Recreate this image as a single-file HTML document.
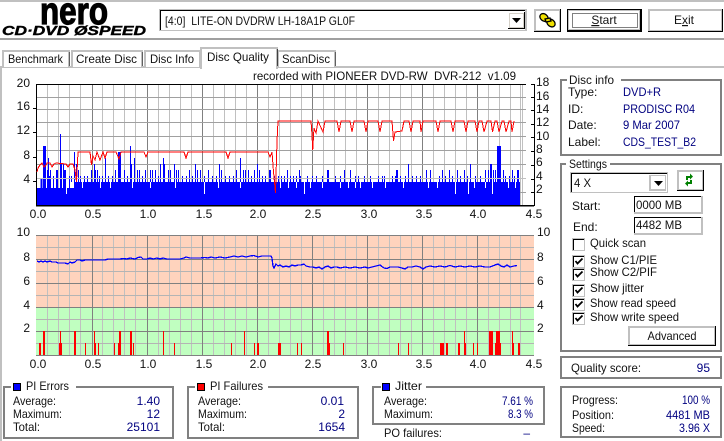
<!DOCTYPE html>
<html><head><meta charset="utf-8"><style>
html,body{margin:0;padding:0;background:#fff;overflow:hidden}
svg{display:block}
text{font-family:"Liberation Sans",sans-serif;font-size:12px;fill:#111}
.b{fill:#000080}
.e{text-anchor:end}
.m{text-anchor:middle}
.g{fill:none;stroke:#808080;stroke-width:2}
</style></head><body>
<svg width="724" height="441" viewBox="0 0 724 441" xmlns="http://www.w3.org/2000/svg">
<rect width="724" height="441" fill="#fff"/>
<g shape-rendering="crispEdges">
<rect x="0" y="0" width="724" height="2" fill="#c0c0c0"/>
<rect x="0" y="38" width="724" height="2" fill="#a0a0a0"/>
<rect x="0" y="66" width="724" height="2" fill="#c0c0c0"/>
<rect x="0" y="66" width="2" height="375" fill="#c0c0c0"/>
</g>
<!-- logo -->
<text x="40" y="24" style="font-size:38px;font-weight:bold;fill:#000;stroke:#000;stroke-width:1.200" textLength="68" lengthAdjust="spacingAndGlyphs">nero</text>
<text x="2" y="35" style="font-size:12.500px;font-weight:bold;font-style:italic;fill:#000;stroke:#000;stroke-width:.4" textLength="144" lengthAdjust="spacingAndGlyphs">CD·DVD ØSPEED</text>
<!-- drive combo -->
<g shape-rendering="crispEdges">
<rect x="159" y="9" width="368" height="22" fill="#c0c0c0"/>
<rect x="160" y="10" width="365" height="20" fill="#000"/>
<rect x="161" y="11" width="364" height="19" fill="#fff"/>
<rect x="508" y="12" width="17" height="17" fill="#000"/>
<rect x="508" y="12" width="16" height="16" fill="#fff"/>
<rect x="509" y="13" width="15" height="15" fill="#d4d0c8"/>
<rect x="510" y="14" width="13" height="13" fill="#fff"/>
</g>
<path d="M512 18h9l-4.500 5z" fill="#000"/>
<text x="165" y="25" textLength="190" lengthAdjust="spacingAndGlyphs">[4:0]&#160; LITE-ON DVDRW LH-18A1P GL0F</text>
<!-- chain button -->
<g shape-rendering="crispEdges">
<rect x="534" y="9" width="27" height="23" fill="#000"/>
<rect x="534" y="9" width="26" height="22" fill="#c0c0c0"/>
<rect x="536" y="11" width="23" height="19" fill="#fff"/>
</g>
<g fill="#f0e000" stroke="#000" stroke-width="1.300">
<ellipse cx="544" cy="17.500" rx="4.500" ry="3.500" transform="rotate(40 544 17.500)"/>
<ellipse cx="551" cy="23" rx="4.500" ry="3.500" transform="rotate(40 551 23)"/>
<path d="M545 19l5 -1 1 3 -5 1z"/>
</g>
<!-- Start -->
<g shape-rendering="crispEdges">
<rect x="567" y="9" width="75" height="23" fill="#000"/>
<rect x="568" y="10" width="72" height="20" fill="#c0c0c0"/>
<rect x="569" y="11" width="70" height="18" fill="#fff"/>
<rect x="572.500" y="13.500" width="65" height="14" fill="none" stroke="#000" stroke-width="1" stroke-dasharray="1 1"/>
<!-- Exit -->
<rect x="648" y="9" width="75" height="23" fill="#000"/>
<rect x="648" y="9" width="74" height="22" fill="#c0c0c0"/>
<rect x="650" y="11" width="71" height="19" fill="#fff"/>
</g>
<text x="604" y="24" class="m"><tspan text-decoration="underline">S</tspan>tart</text>
<text x="684" y="24" class="m">E<tspan text-decoration="underline">x</tspan>it</text>
<!-- tabs -->
<g fill="#fff" stroke="#c0c0c0" stroke-width="2" shape-rendering="crispEdges">
<path d="M3 67V51H69V67"/>
<path d="M72 67V51H142V67"/>
<path d="M145 67V51H200V67"/>
<path d="M278 67V51H335V67"/>
</g>
<g stroke="#606060" stroke-width="1" shape-rendering="crispEdges">
<path d="M69.500 52V66M142.500 52V66M335.500 52V66"/>
</g>
<path d="M201 69V48H277V69" fill="#fff" stroke="#c0c0c0" stroke-width="2" shape-rendering="crispEdges"/>
<path d="M277.500 49V66" stroke="#404040" shape-rendering="crispEdges"/>
<rect x="202" y="64" width="74" height="6" fill="#fff"/>
<text x="8" y="63" textLength="55" lengthAdjust="spacingAndGlyphs">Benchmark</text>
<text x="76" y="63" textLength="61" lengthAdjust="spacingAndGlyphs">Create Disc</text>
<text x="150" y="63" textLength="44" lengthAdjust="spacingAndGlyphs">Disc Info</text>
<text x="207" y="61" textLength="62" lengthAdjust="spacingAndGlyphs">Disc Quality</text>
<text x="282" y="63" textLength="48" lengthAdjust="spacingAndGlyphs">ScanDisc</text>
<text x="253" y="80" textLength="263" xml:space="preserve" lengthAdjust="spacingAndGlyphs">recorded with PIONEER DVD-RW  DVR-212  v1.09</text>

<!-- chart 1 -->
<g shape-rendering="crispEdges">
<path d="M47.500 84V206M58.500 84V206M69.500 84V206M80.500 84V206M102.500 84V206M113.500 84V206M124.500 84V206M135.500 84V206M158.500 84V206M169.500 84V206M180.500 84V206M191.500 84V206M213.500 84V206M224.500 84V206M235.500 84V206M246.500 84V206M268.500 84V206M279.500 84V206M290.500 84V206M301.500 84V206M323.500 84V206M334.500 84V206M345.500 84V206M356.500 84V206M378.500 84V206M389.500 84V206M400.500 84V206M411.500 84V206M433.500 84V206M444.500 84V206M455.500 84V206M466.500 84V206M488.500 84V206M499.500 84V206M510.500 84V206M520.500 84V206M522.500 84V206" stroke="#c0c0c0"/>
<path d="M92.500 84V206M147.500 84V206M202.500 84V206M257.500 84V206M312.500 84V206M367.500 84V206M422.500 84V206M477.500 84V206" stroke="#808080"/>
<path d="M36 97.500H526M36 109.500H526M36 122.500H526M36 136.500H526M36 150.500H526M36 164.500H526M36 192.500H526" stroke="#a0a0a0"/>
<!-- blue mass -->
<path d="M37 206V188H75V182H520V206Z" fill="#0000ff"/>
<path d="M41 188V178M42 188V178M43.500 188V146M44.500 188V146M45.500 188V146M47.500 188V170M48.500 188V158M49.500 188V176M50.500 188V170M53.500 188V176M56.500 188V170M57.500 188V170M60.500 188V134M61.500 188V164M63.500 188V164M64.500 188V170M65.500 188V170M69.500 188V176M71.500 188V176M74.500 188V152M76.500 182V164M78.500 182V170M80.500 182V176M84.500 182V176M87.500 182V176M91.500 182V170M94.500 182V164M95.500 182V170M97.500 182V170M99.500 182V176M102.500 182V176M105.500 182V158M108.500 182V176M112.500 182V176M115.500 182V170M118.500 182V152M119.500 182V152M120.500 182V152M124.500 182V170M127.500 182V176M130.500 182V146M131.500 182V164M134.500 182V158M137.500 182V170M139.500 182V170M142.500 182V176M145.500 182V170M150.500 182V170M152.500 182V170M155.500 182V170M158.500 182V176M160.500 182V164M163.500 182V158M164.500 182V164M168.500 182V170M170.500 182V170M174.500 182V164M176.500 182V170M178.500 182V170M182.500 182V176M186.500 182V176M189.500 182V170M192.500 182V176M195.500 182V164M197.500 182V170M200.500 182V170M204.500 182V176M208.500 182V170M212.500 182V176M216.500 182V176M219.500 182V164M221.500 182V170M225.500 182V176M229.500 182V176M233.500 182V176M236.500 182V170M240.500 182V158M243.500 182V170M245.500 182V170M248.500 182V170M251.500 182V176M254.500 182V170M257.500 182V164M259.500 182V170M262.500 182V176M265.500 182V176M269.500 182V170M270.500 182V170M274.500 182V176M278.500 182V176M281.500 182V176M284.500 182V176M287.500 182V170M290.500 182V176M293.500 182V176M296.500 182V176M299.500 182V170M300.500 182V176M307.500 182V176M312.500 182V176M316.500 182V176M322.500 182V176M327.500 182V170M328.500 182V170M335.500 182V176M340.500 182V176M344.500 182V170M350.500 182V170M355.500 182V176M358.500 182V176M364.500 182V176M370.500 182V176M378.500 182V176M382.500 182V176M384.500 182V176M392.500 182V176M395.500 182V176M400.500 182V176M405.500 182V176M408.500 182V164M412.500 182V176M416.500 182V176M420.500 182V176M396.500 182V170M397.500 182V170M426.500 182V170M430.500 182V170M439.500 182V176M442.500 182V170M445.500 182V176M449.500 182V170M452.500 182V176M457.500 182V170M460.500 182V176M464.500 182V170M467.500 182V176M470.500 182V164M475.500 182V176M480.500 182V176M485.500 182V170M488.500 182V170M490.500 182V164M491.500 182V164M493.500 182V170M495.500 182V170M497.500 182V146M498.500 182V146M499.500 182V146M500.500 182V146M503.500 182V170M505.500 182V176M509.500 182V176M512.500 182V170M514.500 182V176M517.500 182V170M518.500 182V170" stroke="#0000ff" fill="none"/>
<path d="M66.500 182V194M71.500 182V188M82.500 182V188M100.500 182V188M204.500 182V194M218.500 182V188M132.500 182V188M110.500 182V188M150.500 182V188M175.500 182V188M240.500 182V188M304.500 182V194M288.500 182V188M296.500 182V188M310.500 182V188M322.500 182V188M340.500 182V188M348.500 182V188M355.500 182V188M372.500 182V188M385.500 182V188M403.500 182V188M455.500 182V194M428.500 182V188M437.500 182V188M468.500 182V194M474.500 182V188M485.500 182V188M492.500 182V194M508.500 182V188M515.500 182V188M360.500 182V188M280.500 182V188" stroke="#fff"/>
<path d="M36 178.500H526" stroke="#c0c0c0"/>
<rect x="36" y="84" width="490" height="1" fill="#000"/>
<rect x="36" y="84" width="1" height="122" fill="#000"/>
<rect x="36" y="205" width="498" height="1.500" fill="#000"/>
<path d="M534.500 84V206" stroke="#000"/>
<path d="M531 84.500h4M531 97.500h4M531 110.500h4M531 124.500h4M531 137.500h4M531 151.500h4M531 165.500h4M531 179.500h4M531 192.500h4M33 108.500h3M33 132.500h3M33 157.500h3M33 181.500h3" stroke="#000"/>
<path d="M37 172L38 168L40 165L42 163L44 167L46 165L47 163L50 163L52 167L54 164L56 163L66 164L68 167L70 164L73 164L75 170L76.500 182L78 152L90 152L91.500 165L93 156L95 160L97 152L100 160L103 152L105 158L107 152L116 152L119 159L121 152L144 152L146 157L148 152L184 152L186 158L188 152L226 152L228 158L230 152L268 152L270 157L272 152L273.500 172L275.500 193L277 141L278 121L311 121L312 135L312.700 150L314 128L316 133L318 121L323 132L325 121L337 121L339 132L341 121L350 121L352 132L354 121L364 121L366 132L368 121L378 121L380 132L382 121L392 121L393.500 141L395 132L402 131L404 121L409 121L411 132L413 121L420 121L421 132L423 121L436 121L438 132L440 121L451 121L453 132L455 121L464 121L466 132L468 121L475 121L477 132L479 121L482 121L484 132L487 121L491 121L492.500 132L495 121L497 121L499 132L502 121L504 121L506 132L509 121L511 121L512 132L514 121" fill="none" stroke="#ff0000" stroke-width="1"/>
</g>

<!-- chart 2 -->
<g shape-rendering="crispEdges">
<rect x="36" y="235" width="498" height="72" fill="#ffd3bd"/>
<rect x="36" y="307" width="498" height="48" fill="#c0ffc0"/>
<path d="M47.500 235V355M58.500 235V355M69.500 235V355M80.500 235V355M102.500 235V355M113.500 235V355M124.500 235V355M135.500 235V355M158.500 235V355M169.500 235V355M180.500 235V355M191.500 235V355M213.500 235V355M224.500 235V355M235.500 235V355M246.500 235V355M268.500 235V355M279.500 235V355M290.500 235V355M301.500 235V355M323.500 235V355M334.500 235V355M345.500 235V355M356.500 235V355M378.500 235V355M389.500 235V355M400.500 235V355M411.500 235V355M433.500 235V355M444.500 235V355M455.500 235V355M466.500 235V355M488.500 235V355M499.500 235V355M510.500 235V355M520.500 235V355" stroke="#c0c0c0"/>
<path d="M36 247.500H534M36 271.500H534M36 295.500H534M36 319.500H534M36 343.500H534" stroke="#b4b4b4"/>
<path d="M92.500 235V355M147.500 235V355M202.500 235V355M257.500 235V355M312.500 235V355M367.500 235V355M422.500 235V355M477.500 235V355M36 235.500H534M36 259.500H534M36 283.500H534M36 307.500H534M36 331.500H534M36 355.500H534" stroke="#808080"/>
<path d="M39.500 343V355M40.500 343V355M43.500 331V355M44.500 331V355M59.500 343V355M60.500 331V355M61.500 343V355M74.500 331V355M75.500 331V355M85.500 343V355M94.500 331V355M95.500 343V355M98.500 343V355M114.500 343V355M118.500 343V355M119.500 331V355M120.500 331V355M130.500 331V355M131.500 331V355M133.500 343V355M163.500 331V355M174.500 343V355M231.500 343V355M244.500 331V355M254.500 343V355M257.500 343V355M258.500 343V355M278.500 343V355M279.500 343V355M280.500 343V355M297.500 343V355M301.500 343V355M327.500 331V355M328.500 331V355M329.500 343V355M343.500 343V355M398.500 343V355M408.500 343V355M440.500 343V355M441.500 343V355M442.500 343V355M443.500 343V355M446.500 343V355M447.500 343V355M458.500 343V355M459.500 343V355M464.500 331V355M465.500 343V355M473.500 343V355M477.500 343V355M489.500 331V355M490.500 331V355M491.500 331V355M492.500 331V355M495.500 343V355M496.500 331V355M497.500 331V355M498.500 331V355M499.500 331V355M500.500 343V355M512.500 331V355M513.500 343V355M518.500 343V355M519.500 343V355" stroke="#ff0000"/>
<path d="M37 261L39 262L41 261L43 262L45 261L47 262L50 261L52 262L56 262L58 263L65 263L68 264L70 262L72 263L75 262L77 260L80 260L82 261L85 260L90 260L92 260L97 260L105 260L108 259L115 259L120 259L123 258.500L127 259L130 258L135 259L138 257.500L141 257L143 259L147 259L150 258L153 259L157 258L160 259L163 258L167 259L175 259L180 259L184 258L186 257L190 258L195 258L200 258L205 257.500L208 258L211 257L215 258L220 257L225 258L230 257L234 256L238 257L242 256L246 257L250 256L254 255.500L258 257L262 256L268 256L271 256L272 258L273 266L274 268L276 264L278 266L280 265L283 267L286 266L289 267L292 265L295 266L298 265L301 265L304 264L306 266L310 267L313 267L316 268L319 267L322 269L325 267L328 266L331 268L334 267L337 267L340 268L345 267L350 268L355 267L360 268L365 267L368 268L372 267L376 266L380 265L384 268L387 268.500L390 267L394 267L398 267L402 268L405 269L408 267L412 267L416 266L420 267L423 269L426 267L430 266L435 267L440 266L445 267L450 265.500L455 267L460 266L465 267L470 266L475 267L480 266L485 267L490 267L495 265L498 264L501 266L504 267L507 265L510 267L514 266L517 265.500" fill="none" stroke="#0000ff" stroke-width="1.300"/>
</g>

<!-- axis labels -->
<text x="30" y="87" class="e">20</text><text x="30" y="110" class="e">16</text><text x="30" y="134" class="e">12</text><text x="30" y="159" class="e">8</text><text x="30" y="183" class="e">4</text>
<text x="536" y="86">18</text><text x="536" y="100">16</text><text x="536" y="113">14</text><text x="536" y="126">12</text><text x="536" y="140">10</text><text x="536" y="153">8</text><text x="536" y="166">6</text><text x="536" y="180">4</text><text x="536" y="193">2</text>
<text x="38" y="218" class="m">0.0</text><text x="93" y="218" class="m">0.5</text><text x="148" y="218" class="m">1.0</text><text x="204" y="218" class="m">1.5</text><text x="258" y="218" class="m">2.0</text><text x="313" y="218" class="m">2.5</text><text x="369" y="218" class="m">3.0</text><text x="424" y="218" class="m">3.5</text><text x="478" y="218" class="m">4.0</text><text x="534" y="218" class="m">4.5</text>
<text x="38" y="368" class="m">0.0</text><text x="93" y="368" class="m">0.5</text><text x="148" y="368" class="m">1.0</text><text x="204" y="368" class="m">1.5</text><text x="258" y="368" class="m">2.0</text><text x="313" y="368" class="m">2.5</text><text x="369" y="368" class="m">3.0</text><text x="424" y="368" class="m">3.5</text><text x="478" y="368" class="m">4.0</text><text x="534" y="368" class="m">4.5</text>
<text x="30" y="236" class="e">10</text><text x="30" y="261" class="e">8</text><text x="30" y="285" class="e">6</text><text x="30" y="309" class="e">4</text><text x="30" y="332" class="e">2</text>
<text x="537" y="236">10</text><text x="537" y="261">8</text><text x="537" y="285">6</text><text x="537" y="309">4</text><text x="537" y="332">2</text>

<!-- group boxes -->
<g shape-rendering="crispEdges">
<rect x="561" y="80" width="160" height="75" class="g"/>
<rect x="561" y="164" width="160" height="187" class="g"/>
<rect x="561" y="357" width="160" height="21" class="g"/>
<rect x="561" y="387" width="160" height="50" class="g"/>
<rect x="4" y="387" width="169" height="51" class="g"/>
<rect x="188" y="387" width="170" height="51" class="g"/>
<rect x="373" y="387" width="171" height="37" class="g"/>
<rect x="567" y="76" width="54" height="9" fill="#fff"/>
<rect x="566" y="160" width="44" height="9" fill="#fff"/>
<rect x="11" y="382" width="65" height="9" fill="#fff"/>
<rect x="195" y="382" width="73" height="9" fill="#fff"/>
<rect x="381" y="382" width="45" height="8" fill="#fff"/>
<rect x="13" y="383" width="8" height="8" fill="#000"/>
<rect x="14" y="384" width="6" height="6" fill="#0000ff"/>
<rect x="197" y="383" width="8" height="8" fill="#000"/>
<rect x="198" y="384" width="6" height="6" fill="#ff0000"/>
<rect x="382" y="383" width="8" height="8" fill="#000"/>
<rect x="383" y="384" width="6" height="6" fill="#0000ff"/>
</g>
<text x="569" y="84" textLength="45" lengthAdjust="spacingAndGlyphs">Disc info</text>
<text x="568" y="96">Type:</text><text x="623" y="96" class="b" textLength="38" lengthAdjust="spacingAndGlyphs">DVD+R</text>
<text x="568" y="113">ID:</text><text x="623" y="113" class="b" textLength="72" lengthAdjust="spacingAndGlyphs">PRODISC R04</text>
<text x="568" y="129">Date:</text><text x="623" y="129" class="b" textLength="57" lengthAdjust="spacingAndGlyphs">9 Mar 2007</text>
<text x="568" y="146">Label:</text><text x="623" y="146" class="b" textLength="73" lengthAdjust="spacingAndGlyphs">CDS_TEST_B2</text>

<text x="569" y="168" textLength="38" lengthAdjust="spacingAndGlyphs">Settings</text>
<!-- speed combo -->
<g shape-rendering="crispEdges">
<rect x="570" y="172" width="98" height="21" fill="#c0c0c0"/>
<rect x="571" y="173" width="96" height="19" fill="#000"/>
<rect x="572" y="174" width="95" height="18" fill="#fff"/>
<rect x="649" y="175" width="17" height="16" fill="#c0c0c0"/>
<rect x="651" y="176" width="14" height="13" fill="#fff"/>
<!-- refresh button -->
<rect x="677" y="170" width="27" height="21" fill="#000"/>
<rect x="677" y="170" width="26" height="20" fill="#c0c0c0"/>
<rect x="679" y="172" width="23" height="17" fill="#fff"/>
<!-- inputs -->
<rect x="634" y="196" width="69" height="18" fill="#c0c0c0"/>
<rect x="634" y="196" width="67" height="16" fill="#000"/>
<rect x="635" y="197" width="66" height="15" fill="#fff"/>
<rect x="634" y="217" width="69" height="18" fill="#c0c0c0"/>
<rect x="634" y="217" width="67" height="16" fill="#000"/>
<rect x="635" y="218" width="66" height="15" fill="#fff"/>
</g>
<path d="M654 181h9l-4.500 5z" fill="#000"/>
<path d="M686 180V176h4V173.500l3 3 -3 3V178h-2v2zM692 180v4h-4v2.500l-3 -3 3 -3V182h2v-2z" fill="#008000"/>
<text x="574" y="187" textLength="17" xml:space="preserve" lengthAdjust="spacingAndGlyphs">4 X</text>
<text x="572" y="210">Start:</text><text x="636" y="209" textLength="46" lengthAdjust="spacingAndGlyphs">0000 MB</text>
<text x="573" y="231">End:</text><text x="636" y="229" textLength="46" lengthAdjust="spacingAndGlyphs">4482 MB</text>
<!-- checkboxes -->
<g shape-rendering="crispEdges">
<rect x="572" y="238" width="13" height="13" fill="#c0c0c0"/><rect x="573" y="239" width="11" height="11" fill="#000"/><rect x="574" y="240" width="10" height="10" fill="#fff"/>
<rect x="572" y="255" width="13" height="13" fill="#c0c0c0"/><rect x="573" y="256" width="11" height="11" fill="#000"/><rect x="574" y="257" width="10" height="10" fill="#fff"/>
<rect x="572" y="268" width="13" height="13" fill="#c0c0c0"/><rect x="573" y="269" width="11" height="11" fill="#000"/><rect x="574" y="270" width="10" height="10" fill="#fff"/>
<rect x="572" y="284" width="13" height="13" fill="#c0c0c0"/><rect x="573" y="285" width="11" height="11" fill="#000"/><rect x="574" y="286" width="10" height="10" fill="#fff"/>
<rect x="572" y="298" width="13" height="13" fill="#c0c0c0"/><rect x="573" y="299" width="11" height="11" fill="#000"/><rect x="574" y="300" width="10" height="10" fill="#fff"/>
<rect x="572" y="312" width="13" height="13" fill="#c0c0c0"/><rect x="573" y="313" width="11" height="11" fill="#000"/><rect x="574" y="314" width="10" height="10" fill="#fff"/>
</g>
<path d="M575.500 261l2 2.500 5-5M575.500 274l2 2.500 5-5M575.500 290l2 2.500 5-5M575.500 304l2 2.500 5-5M575.500 318l2 2.500 5-5" fill="none" stroke="#000" stroke-width="1.800"/>
<text x="590" y="247" textLength="56" lengthAdjust="spacingAndGlyphs">Quick scan</text>
<text x="590" y="264" textLength="67" lengthAdjust="spacingAndGlyphs">Show C1/PIE</text>
<text x="590" y="276" textLength="67" lengthAdjust="spacingAndGlyphs">Show C2/PIF</text>
<text x="590" y="292" textLength="54" lengthAdjust="spacingAndGlyphs">Show jitter</text>
<text x="590" y="307" textLength="86" lengthAdjust="spacingAndGlyphs">Show read speed</text>
<text x="590" y="321" textLength="89" lengthAdjust="spacingAndGlyphs">Show write speed</text>
<g shape-rendering="crispEdges">
<rect x="628" y="326" width="88" height="20" fill="#000"/>
<rect x="628" y="326" width="87" height="19" fill="#c0c0c0"/>
<rect x="630" y="328" width="84" height="16" fill="#fff"/>
</g>
<text x="672" y="340" class="m" textLength="49" lengthAdjust="spacingAndGlyphs">Advanced</text>

<text x="571" y="372" textLength="70" lengthAdjust="spacingAndGlyphs">Quality score:</text><text x="710" y="372" class="b e">95</text>
<text x="572" y="404" textLength="46" lengthAdjust="spacingAndGlyphs">Progress:</text><text x="710" y="404" class="b e" textLength="28" lengthAdjust="spacingAndGlyphs">100 %</text>
<text x="572" y="419" textLength="42" lengthAdjust="spacingAndGlyphs">Position:</text><text x="710" y="419" class="b e" textLength="44" lengthAdjust="spacingAndGlyphs">4481 MB</text>
<text x="572" y="432" textLength="33" lengthAdjust="spacingAndGlyphs">Speed:</text><text x="710" y="432" class="b e" textLength="31" lengthAdjust="spacingAndGlyphs">3.96 X</text>

<text x="26" y="390" textLength="43" lengthAdjust="spacingAndGlyphs">PI Errors</text>
<text x="13" y="405" textLength="43" lengthAdjust="spacingAndGlyphs">Average:</text><text x="160" y="405" class="b e">1.40</text>
<text x="13" y="418" textLength="49" lengthAdjust="spacingAndGlyphs">Maximum:</text><text x="160" y="418" class="b e">12</text>
<text x="13" y="431" textLength="27" lengthAdjust="spacingAndGlyphs">Total:</text><text x="160" y="431" class="b e">25101</text>

<text x="210" y="390" textLength="53" lengthAdjust="spacingAndGlyphs">PI Failures</text>
<text x="198" y="405" textLength="43" lengthAdjust="spacingAndGlyphs">Average:</text><text x="344" y="405" class="b e">0.01</text>
<text x="198" y="418" textLength="49" lengthAdjust="spacingAndGlyphs">Maximum:</text><text x="345" y="418" class="b e">2</text>
<text x="198" y="431" textLength="27" lengthAdjust="spacingAndGlyphs">Total:</text><text x="345" y="431" class="b e">1654</text>

<text x="395" y="390" textLength="27" lengthAdjust="spacingAndGlyphs">Jitter</text>
<text x="384" y="405" textLength="43" lengthAdjust="spacingAndGlyphs">Average:</text><text x="533" y="405" class="b e" textLength="31" lengthAdjust="spacingAndGlyphs">7.61 %</text>
<text x="384" y="418" textLength="49" lengthAdjust="spacingAndGlyphs">Maximum:</text><text x="533" y="418" class="b e" textLength="25" lengthAdjust="spacingAndGlyphs">8.3 %</text>
<text x="384" y="437" textLength="58" lengthAdjust="spacingAndGlyphs">PO failures:</text><text x="530" y="437" class="b e">–</text>
</svg>
</body></html>
